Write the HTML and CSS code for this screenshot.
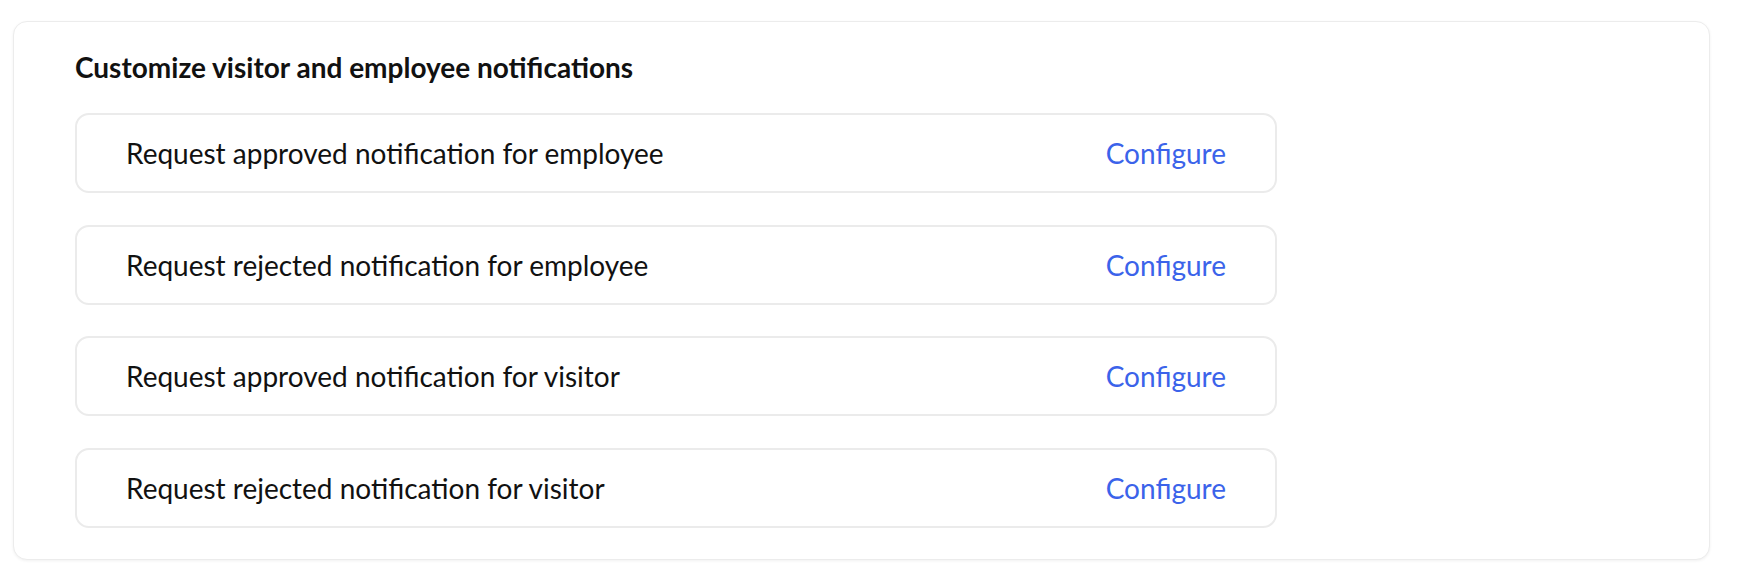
FILE: index.html
```html
<!DOCTYPE html>
<html lang="en">
<head>
<meta charset="utf-8">
<title>Notifications</title>
<link rel="stylesheet" href="styles.css">
</head>
<body>
<div class="page">
  <section class="card">
    <h2 class="card-title">Customize visitor and employee notifications</h2>
    <ul class="list">
      <li class="row"><span class="row-label">Request approved notification for employee</span><a class="row-link" href="#">Configure</a></li>
      <li class="row"><span class="row-label">Request rejected notification for employee</span><a class="row-link" href="#">Configure</a></li>
      <li class="row"><span class="row-label">Request approved notification for visitor</span><a class="row-link" href="#">Configure</a></li>
      <li class="row"><span class="row-label">Request rejected notification for visitor</span><a class="row-link" href="#">Configure</a></li>
    </ul>
  </section>
</div>
</body>
</html>
```

FILE: styles.css
```css
html, body {
  margin: 0;
  padding: 0;
  background: #ffffff;
}

body {
  font-family: Lato, "Noto Sans", sans-serif;
  color: #111111;
}

.page {
  padding: 21px 42px 20px 13px;
}

.card {
  background: #ffffff;
  border: 1px solid #ececec;
  border-radius: 14px;
  box-shadow: 0 1px 3px rgba(0, 0, 0, 0.06);
  padding: 30px 0 31px 61px;
}

.card-title {
  margin: 0 0 31px 0;
  font-size: 28px;
  line-height: 30px;
  font-weight: 700;
  color: #111111;
}

.list {
  list-style: none;
  margin: 0;
  padding: 0;
  display: flex;
  flex-direction: column;
  gap: 31.7px;
}

.row {
  box-sizing: border-box;
  width: 1202px;
  height: 80px;
  border: 2px solid #ebebeb;
  border-radius: 14px;
  display: flex;
  align-items: center;
  justify-content: space-between;
  padding: 0 49px 0 49px;
}

.row-label {
  font-size: 28px;
  color: #111111;
}

.row-link {
  font-size: 28px;
  color: #3b63ea;
  text-decoration: none;
}
```
